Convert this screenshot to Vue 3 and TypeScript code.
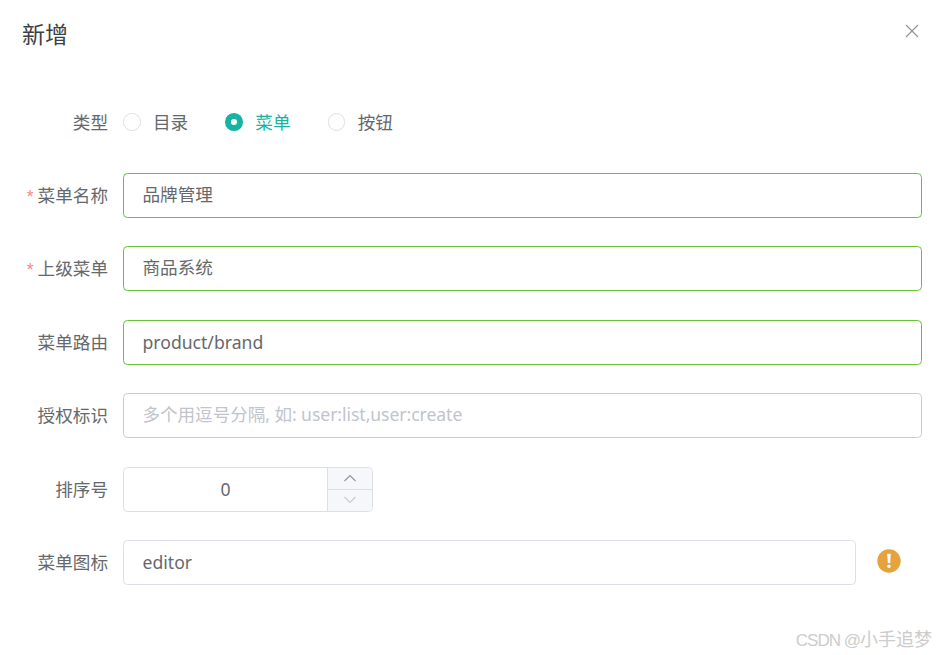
<script setup lang="ts">
interface Option { label: string; active: boolean }
const options: Option[] = [
  { label: '目录', active: false },
  { label: '菜单', active: true },
  { label: '按钮', active: false },
]
</script>

<template>
  <div class="dialog">
    <header class="head">
      <h2 class="title">新增</h2>
      <svg class="close" viewBox="0 0 14 14" width="14" height="14"><path d="M1 1L13 13M13 1L1 13" stroke="#909399" stroke-width="1.2" fill="none" /></svg>
    </header>
    <form class="form" @submit.prevent>
      <div class="row">
        <label class="label"><span class="t">类型</span></label>
        <div class="radios">
          <span v-for="o in options" :key="o.label" class="radio" :class="{ on: o.active }">
            <i class="dot"></i><span class="t">{{ o.label }}</span>
          </span>
        </div>
      </div>
      <div class="row">
        <label class="label"><em>*</em><span class="t">菜单名称</span></label>
        <div class="input ok"><span class="t">品牌管理</span></div>
      </div>
      <div class="row">
        <label class="label"><em>*</em><span class="t">上级菜单</span></label>
        <div class="input ok"><span class="t">商品系统</span></div>
      </div>
      <div class="row">
        <label class="label"><span class="t">菜单路由</span></label>
        <div class="input ok">product/brand</div>
      </div>
      <div class="row">
        <label class="label"><span class="t">授权标识</span></label>
        <div class="input ph"><span class="t">多个用逗号分隔, 如: user:list,user:create</span></div>
      </div>
      <div class="row">
        <label class="label"><span class="t">排序号</span></label>
        <div class="number">
          <div class="num-val">0</div>
          <div class="num-btns">
            <span class="num-btn"><svg viewBox="0 0 14 8" width="14" height="8"><path d="M1.5 7L7 1.5L12.5 7" stroke="#909399" stroke-width="1.1" fill="none" /></svg></span>
            <span class="num-btn"><svg viewBox="0 0 14 8" width="14" height="8"><path d="M1.5 1L7 6.5L12.5 1" stroke="#c8c9cf" stroke-width="1.1" fill="none" /></svg></span>
          </div>
        </div>
      </div>
      <div class="row">
        <label class="label"><span class="t">菜单图标</span></label>
        <div class="input">editor</div>
        <svg class="warn" viewBox="0 0 24 24" width="24" height="24">
          <circle cx="12" cy="12" r="11.7" fill="#e6a23c" />
          <path d="M10.2 4.8h3.6l-.6 9.2h-2.4z" fill="#fff" />
          <circle cx="12" cy="17.2" r="1.7" fill="#fff" />
        </svg>
      </div>
    </form>
    <div class="mark"><span class="mark-latin">CSDN @</span>小手追梦</div>
  </div>
</template>

<style>
html, body { margin: 0; background: #fff; }
</style>

<style scoped>
.dialog {
  position: relative;
  width: 936px;
  height: 655px;
  overflow: hidden;
  background: #fff;
  font-family: "Noto Sans", "Noto Sans CJK SC", sans-serif;
  font-size: 17.6px;
  color: #66686c;
}
.t {
  display: inline-block;
  transform: translateY(-1.5px);
}
.head {
  display: flex;
  justify-content: space-between;
  align-items: flex-start;
  padding: 18px 17px 0 22px;
  height: 82px;
  box-sizing: border-box;
}
.title {
  margin: 0;
  font-size: 23px;
  line-height: 32px;
  font-weight: 400;
  color: #3d3f42;
}
.close { margin-top: 6px; }
.form {
  display: flex;
  flex-direction: column;
  gap: 28.4px;
  padding: 17.6px 14px 0 0;
}
.row {
  display: flex;
  align-items: center;
  height: 45px;
}
.label {
  flex: none;
  width: 108px;
  margin-right: 15px;
  text-align: right;
}
.label em {
  color: #f78989;
  font-family: "Liberation Sans", sans-serif;
  font-size: 17.6px;
  font-style: normal;
  margin-right: 4px;
}
.radios {
  display: flex;
  gap: 37.2px;
}
.radio {
  display: inline-flex;
  align-items: center;
}
.radio.on { color: #17b3a3; }
.dot {
  width: 17.6px;
  height: 17.6px;
  margin-right: 12.4px;
  border: 1px solid #dcdfe6;
  border-radius: 50%;
  box-sizing: border-box;
  background: #fff;
}
.on .dot {
  border: 6px solid #17b3a3;
}
.input {
  flex: 1;
  height: 45px;
  box-sizing: border-box;
  padding: 0 18.5px;
  border: 1px solid #dcdfe6;
  border-radius: 4.4px;
  line-height: 43px;
}
.input.ok { border-color: #67c23a; }
.input.ph {
  color: #c0c4cc;
  border-color: #c8cbd2;
  letter-spacing: -0.06px;
}
.warn {
  flex: none;
  margin: 0 21px 3px;
}
.number {
  display: flex;
  width: 250px;
  height: 45px;
  box-sizing: border-box;
  border: 1px solid #dcdfe6;
  border-radius: 4.4px;
  overflow: hidden;
}
.num-val {
  flex: 1;
  text-align: center;
  line-height: 43px;
}
.num-btns {
  display: flex;
  flex-direction: column;
  width: 44px;
  border-left: 1px solid #dcdfe6;
}
.num-btn {
  flex: 1;
  display: flex;
  align-items: center;
  justify-content: center;
  background: #f5f7fa;
}
.num-btn + .num-btn { border-top: 1px solid #dcdfe6; }
.mark {
  position: absolute;
  right: 4px;
  top: 627px;
  font-family: "Liberation Sans", "Noto Sans CJK SC", sans-serif;
  font-size: 18px;
  line-height: 26px;
  color: #ccc;
}
.mark-latin {
  font-size: 17px;
  letter-spacing: -1px;
}
</style>
